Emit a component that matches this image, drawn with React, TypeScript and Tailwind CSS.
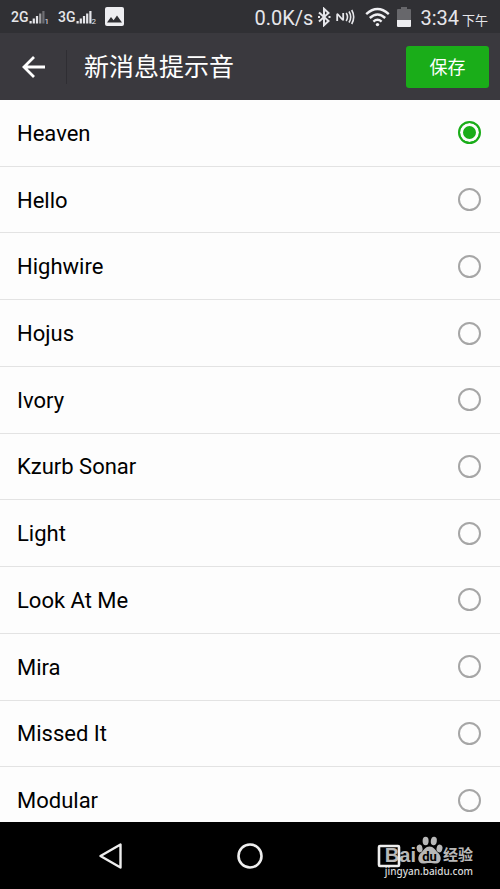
import { useState } from "react";

const sounds = [
  "Heaven",
  "Hello",
  "Highwire",
  "Hojus",
  "Ivory",
  "Kzurb Sonar",
  "Light",
  "Look At Me",
  "Mira",
  "Missed It",
  "Modular",
];

function Signal({ network, sim, dim }: { network: string; sim: string; dim?: boolean }) {
  return (
    <div className="flex h-4 items-end">
      <span className="text-[14px] leading-4 font-medium">{network}</span>
      <svg className="h-4 w-4" viewBox="0 0 16 16" fill="currentColor">
        <rect x="0.5" y="12" width="2.2" height="2.500" />
        <rect x="3.700" y="9.500" width="2.200" height="5" />
        <rect x="6.900" y="7" width="2.200" height="7.500" />
        <rect x="10.100" y="4.500" width="2.200" height="10" opacity={dim ? 0.6 : 1} />
        <rect x="13.300" y="2" width="2.200" height="12.500" opacity={dim ? 0.35 : 1} />
      </svg>
      <span className="text-[8px] leading-[6px]">{sim}</span>
    </div>
  );
}

function StatusBar() {
  return (
    <div className="flex h-[33px] items-center justify-between bg-[#303034] pr-3 pl-[11px] text-[#e6e6ea]">
      <div className="flex items-center gap-[9px]">
        <Signal network="2G" sim="1" dim />
        <Signal network="3G" sim="2" />
        <svg className="h-[19px] w-[19px]" viewBox="0 0 19 19">
          <rect width="19" height="19" rx="2" fill="#eeeef1" />
          <path d="M2 15.5 6 10l2.6 3.2L12 8.5l5 7Z" fill="#303034" />
        </svg>
      </div>
      <div className="flex items-center">
        <span className="pt-[2px] text-[20px] leading-6">0.0K/s</span>
        <svg className="ml-1 h-5 w-[14px]" viewBox="0 0 14 20" fill="none" stroke="currentColor" strokeWidth="2">
          <path d="M2 5.5 11.5 14 7 18.2V1.8L11.5 6 2 14.5" />
          <path d="M1 10h2M11.500 10h2" />
        </svg>
        <svg className="ml-[5px] h-[18px] w-[19px]" viewBox="0 0 19 18" fill="none" stroke="currentColor" strokeWidth="1.8">
          <path d="M1.2 13V6.6Q1.2 5.6 2 6.5L6.4 11.5Q7.2 12.4 7.2 11.4V5" />
          <path d="M10.200 5q2.600 4 0 8M13 3.500q3.400 5.500 0 11M15.700 2q4 7 0 14" strokeWidth="1.600" />
        </svg>
        <svg className="ml-[10px] h-5 w-[25px]" viewBox="0 0 25 20" fill="none" stroke="#f0f0f3" strokeWidth="2.4">
          <path d="M1.2 7.2Q12.5-3 23.8 7.2M4.8 11Q12.5 4 20.2 11M8.4 14.6Q12.5 11 16.6 14.6" />
          <circle cx="12.5" cy="17.6" r="1.7" fill="#f0f0f3" stroke="none" />
        </svg>
        <svg className="ml-[7px] h-5 w-[14px]" viewBox="0 0 14 20">
          <path d="M1 2h3V0h6v2h3q1 0 1 1v11H0V3q0-1 1-1Z" fill="#67676b" />
          <path d="M0 13h14v6q0 1-1 1H1q-1 0-1-1Z" fill="#eeeef1" />
        </svg>
        <div className="ml-[9px] flex items-baseline gap-[3px] pt-[2px]">
          <span className="text-[20px] leading-6">3:34</span>
          <span className="text-[13px] leading-4">下午</span>
        </div>
      </div>
    </div>
  );
}

function Watermark() {
  return (
    <div className="pointer-events-none absolute top-[13px] right-[27px] flex flex-col items-center text-[#b8b8b8]">
      <div className="flex h-[30px] items-end">
        <span className="font-['Liberation_Sans',sans-serif] text-[20px] leading-5 font-bold">Bai</span>
        <svg className="h-[29px] w-[27px]" viewBox="0 0 27 29" fill="currentColor">
          <ellipse cx="3.6" cy="12.500" rx="2.9" ry="3.900" transform="rotate(-12 3.6 12.5)" />
          <ellipse cx="9.600" cy="5" rx="3" ry="4.200" />
          <ellipse cx="17.800" cy="5" rx="3" ry="4.200" transform="rotate(8 17.8 5)" />
          <ellipse cx="23.500" cy="12.500" rx="2.9" ry="3.900" transform="rotate(14 23.5 12.5)" />
          <path d="M13.500 10.500c4 0 5.500 3.500 8.500 6.200 4.200 3.600 3.500 10.800-2 10.800-2.500 0-4-.5-6.500-.5s-4 .5-6.500.5c-5.500 0-6.200-7.200-2-10.800 3-2.700 4.500-6.200 8.500-6.200Z" />
          <text x="13.500" y="25" textAnchor="middle" fontSize="13" fontWeight="700" fill="#000000">du</text>
        </svg>
        <span className="text-[15px] leading-5 font-bold">经验</span>
      </div>
      <span className="font-['Noto_Sans',sans-serif] text-[10px] leading-3 font-medium text-[#dadada]">jingyan.baidu.com</span>
    </div>
  );
}

export default function App() {
  const [selected, setSelected] = useState("Heaven");

  return (
    <div className="flex h-screen flex-col bg-[#fdfdfd] font-['Roboto','Noto_Sans_CJK_SC',sans-serif]">
      <StatusBar />

      <header className="flex h-[67px] shrink-0 items-center bg-[#3a393e] pr-[11px] pl-[22px] text-white">
        <button type="button" aria-label="返回">
          <svg className="h-6 w-6" viewBox="0 0 24 24" fill="none" stroke="currentColor" strokeWidth="2.8">
            <path d="M23 12H2.500M12 2 2 12l10 10" />
          </svg>
        </button>
        <div className="ml-5 h-[34px] w-px bg-[#2f2e33]" />
        <h1 className="ml-[17px] flex-1 pt-[2px] text-[25px] leading-8">新消息提示音</h1>
        <button type="button" className="h-[42px] w-[83px] rounded-[3px] bg-[#1aad19] pt-[2px] text-[18px] leading-6">
          保存
        </button>
      </header>

      <main className="min-h-0 flex-1 overflow-hidden">
        <ul className="grid h-[734px] auto-rows-fr">
          {sounds.map((name) => (
            <li key={name} className="border-b border-[#e3e3e3]">
              <label className="flex h-full items-center justify-between pr-[19px] pl-[17px]">
                <span className="pt-[2px] text-[22px] leading-7 text-black">{name}</span>
                <input
                  type="radio"
                  name="sound"
                  checked={selected === name}
                  onChange={() => setSelected(name)}
                  className="h-[23px] w-[23px] appearance-none rounded-full border-2 border-[#a6a6a6] checked:border-[#1aad19] checked:bg-[#1aad19] checked:shadow-[inset_0_0_0_3px_#fdfdfd]"
                />
              </label>
            </li>
          ))}
        </ul>
      </main>

      <nav className="relative grid h-[67px] shrink-0 grid-cols-3 bg-black px-[41px] text-[#eeeeee]">
        <button type="button" aria-label="后退" className="grid place-items-center">
          <svg className="h-[26px] w-[26px]" viewBox="0 0 26 26" fill="none" stroke="currentColor" strokeWidth="2.400" strokeLinejoin="round">
            <path d="M22.500 1.500v23L2.500 13Z" />
          </svg>
        </button>
        <button type="button" aria-label="主页" className="grid place-items-center">
          <svg className="h-[26px] w-[26px]" viewBox="0 0 26 26" fill="none" stroke="currentColor" strokeWidth="2.600">
            <circle cx="13" cy="13" r="11.500" />
          </svg>
        </button>
        <button type="button" aria-label="最近任务" className="z-10 grid place-items-center">
          <svg className="h-6 w-6" viewBox="0 0 24 24" fill="none" stroke="currentColor" strokeWidth="2.600">
            <rect x="2" y="2" width="20" height="20" rx="1" />
          </svg>
        </button>
        <Watermark />
      </nav>
    </div>
  );
}
